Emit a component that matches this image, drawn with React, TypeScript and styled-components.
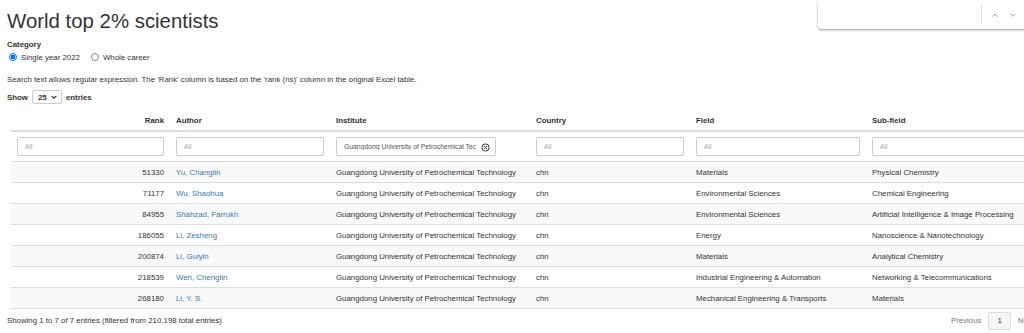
import React, { FC } from "react";
import styled, { createGlobalStyle } from "styled-components";

const GlobalStyle = createGlobalStyle`
  html, body {
    margin: 0;
    padding: 0;
    background: #fff;
    overflow: hidden;
  }
  body {
    font-family: "Liberation Sans", Arial, sans-serif;
    font-size: 7.85px;
    color: #333;
  }
`;

const Page = styled.div`
  position: relative;
  width: 1024px;
  height: 333px;
  overflow: hidden;
  padding-left: 7px;
  box-sizing: border-box;
`;

const Title = styled.h1`
  margin: 10px 0 0;
  font-size: 20.4px;
  font-weight: 400;
  line-height: 22px;
  color: #333;
`;

const Label = styled.div`
  margin-top: 8px;
  font-weight: 700;
  line-height: 9px;
`;

const RadioRow = styled.div`
  display: flex;
  align-items: center;
  gap: 9px;
  margin-top: 3px;
  height: 10px;
`;

const RadioOption = styled.label`
  display: flex;
  align-items: center;
  gap: 4px;
  padding-left: 2px;
`;

const RadioDot = styled.span<{ checked?: boolean }>`
  width: 8px;
  height: 8px;
  border-radius: 50%;
  box-sizing: border-box;
  border: 1px solid ${({ checked }) => (checked ? "#0075ff" : "#858585")};
  background: ${({ checked }) =>
    checked ? "radial-gradient(circle, #0075ff 0 2.2px, #fff 2.6px)" : "#fff"};
`;

const Note = styled.div`
  margin-top: 13px;
  line-height: 9px;
`;

const ShowRow = styled.div`
  display: flex;
  align-items: center;
  gap: 4px;
  margin-top: 6px;
  height: 14px;
  font-weight: 700;
`;

const Select = styled.div`
  display: flex;
  align-items: center;
  justify-content: space-between;
  width: 30px;
  height: 14px;
  box-sizing: border-box;
  padding: 0 4px 0 5px;
  border: 1px solid #ccc;
  border-radius: 2px;
  font-weight: 700;
`;

const TableWrap = styled.div`
  margin: 6px 0 0 4px;
`;

const Table = styled.table`
  border-collapse: collapse;
  table-layout: fixed;
  width: 1040px;
`;

const HeadCell = styled.th<{ right?: boolean }>`
  height: 20px;
  padding: 0 6px;
  text-align: ${({ right }) => (right ? "right" : "left")};
  font-weight: 700;
  border-bottom: 2px solid #ddd;
`;

const FilterCell = styled.td`
  height: 29px;
  padding: 0 6px;
  border-bottom: 1px solid #ddd;
`;

const FilterInput = styled.div<{ filled?: boolean; w?: number }>`
  position: relative;
  display: flex;
  align-items: center;
  height: 19px;
  width: ${({ w }) => (w ? `${w}px` : "100%")};
  box-sizing: border-box;
  padding: 0 ${({ filled }) => (filled ? "17px" : "7px")} 0 7px;
  border: 1px solid #ccc;
  border-radius: 2px;
  font-size: 6.8px;
  color: ${({ filled }) => (filled ? "#555" : "#aaa")};
  white-space: nowrap;
`;

const FilterText = styled.span`
  overflow: hidden;
  white-space: nowrap;
`;

const ClearIcon = styled.svg`
  position: absolute;
  right: 5px;
  top: 4.5px;
`;

const Row = styled.tr<{ striped?: boolean }>`
  background: ${({ striped }) => (striped ? "#f9f9f9" : "#fff")};
`;

const Cell = styled.td<{ right?: boolean }>`
  height: 20px;
  padding: 0 6px;
  border-top: 1px solid #ddd;
  text-align: ${({ right }) => (right ? "right" : "left")};
  white-space: nowrap;
  overflow: hidden;
`;

const Link = styled.a`
  color: #337ab7;
  text-decoration: none;
`;

const Footer = styled.div`
  display: flex;
  align-items: center;
  justify-content: space-between;
  margin-top: 2px;
  height: 19px;
`;

const Pager = styled.div`
  display: flex;
  align-items: center;
  margin-right: -17px;
`;

const PageLink = styled.span<{ active?: boolean }>`
  display: flex;
  align-items: center;
  justify-content: center;
  height: 18px;
  box-sizing: border-box;
  padding: 0 ${({ active }) => (active ? "8px" : "6px")};
  color: ${({ active }) => (active ? "#333" : "#777")};
  border: 1px solid ${({ active }) => (active ? "#ddd" : "transparent")};
  background: ${({ active }) => (active ? "#f6f6f6" : "transparent")};
  border-radius: 2px;
`;

const FindBar = styled.div`
  position: absolute;
  top: 0;
  left: 818px;
  width: 216px;
  height: 29px;
  background: #fff;
  border-radius: 0 0 3px 3px;
  box-shadow: 0 1px 3px rgba(0, 0, 0, 0.3), 0 1px 1px rgba(0, 0, 0, 0.12);
  display: flex;
  align-items: center;
`;

const FindField = styled.div`
  flex: 1;
  height: 19px;
  border-right: 1px solid #e3e3e3;
`;

const FindButtons = styled.div`
  display: flex;
  align-items: center;
  gap: 12px;
  padding: 0 18px 0 10px;
`;

const Chevron: FC<{ up?: boolean }> = ({ up }) => (
  <svg width="6" height="4" viewBox="0 0 6 4">
    <path
      d={up ? "M0.5 3.5 L3 1 L5.5 3.5" : "M0.5 0.8 L3 3.3 L5.5 0.8"}
      fill="none"
      stroke="#9a9a9a"
      strokeWidth="1"
    />
  </svg>
);

type Scientist = {
  rank: number;
  author: string;
  field: string;
  subfield: string;
};

const rows: Scientist[] = [
  { rank: 51330, author: "Yu, Changlin", field: "Materials", subfield: "Physical Chemistry" },
  { rank: 71177, author: "Wu, Shaohua", field: "Environmental Sciences", subfield: "Chemical Engineering" },
  { rank: 84955, author: "Shahzad, Farrukh", field: "Environmental Sciences", subfield: "Artificial Intelligence & Image Processing" },
  { rank: 186055, author: "Li, Zesheng", field: "Energy", subfield: "Nanoscience & Nanotechnology" },
  { rank: 200874, author: "Li, Guiyin", field: "Materials", subfield: "Analytical Chemistry" },
  { rank: 218539, author: "Wen, Chenglin", field: "Industrial Engineering & Automation", subfield: "Networking & Telecommunications" },
  { rank: 268180, author: "Li, Y. S.", field: "Mechanical Engineering & Transports", subfield: "Materials" },
];

const institute = "Guangdong University of Petrochemical Technology";

const App: FC = () => {
  return (
    <Page>
      <GlobalStyle />
      <Title>World top 2% scientists</Title>
      <Label>Category</Label>
      <RadioRow>
        <RadioOption>
          <RadioDot checked />
          Single year 2022
        </RadioOption>
        <RadioOption>
          <RadioDot />
          Whole career
        </RadioOption>
      </RadioRow>
      <Note>
        Search text allows regular expression. The 'Rank' column is based on
        the 'rank (ns)' column in the original Excel table.
      </Note>
      <ShowRow>
        Show
        <Select>
          <span>25</span>
          <svg width="6" height="4" viewBox="0 0 6 4">
            <path d="M0.6 0.8 L3 3.2 L5.4 0.8" fill="none" stroke="#333" strokeWidth="1.1" />
          </svg>
        </Select>
        entries
      </ShowRow>

      <TableWrap>
        <Table>
          <colgroup>
            <col style={{ width: 159 }} />
            <col style={{ width: 160 }} />
            <col style={{ width: 200 }} />
            <col style={{ width: 160 }} />
            <col style={{ width: 176 }} />
            <col style={{ width: 185 }} />
          </colgroup>
          <thead>
            <tr>
              <HeadCell right>Rank</HeadCell>
              <HeadCell>Author</HeadCell>
              <HeadCell>Institute</HeadCell>
              <HeadCell>Country</HeadCell>
              <HeadCell>Field</HeadCell>
              <HeadCell>Sub-field</HeadCell>
            </tr>
            <tr>
              <FilterCell><FilterInput>All</FilterInput></FilterCell>
              <FilterCell><FilterInput>All</FilterInput></FilterCell>
              <FilterCell>
                <FilterInput filled w={160}>
                  <FilterText>Guangdong University of Petrochemical Tec</FilterText>
                  <ClearIcon width="9" height="9" viewBox="0 0 10 10">
                    <circle cx="5" cy="5" r="4" fill="none" stroke="#333" strokeWidth="1.1" />
                    <path d="M3.4 3.4 L6.6 6.6 M6.6 3.4 L3.4 6.6" stroke="#333" strokeWidth="1.1" />
                  </ClearIcon>
                </FilterInput>
              </FilterCell>
              <FilterCell><FilterInput>All</FilterInput></FilterCell>
              <FilterCell><FilterInput>All</FilterInput></FilterCell>
              <FilterCell><FilterInput>All</FilterInput></FilterCell>
            </tr>
          </thead>
          <tbody>
            {rows.map((r, i) => (
              <Row key={r.rank} striped={i % 2 === 0}>
                <Cell right>{r.rank}</Cell>
                <Cell><Link href="#">{r.author}</Link></Cell>
                <Cell>{institute}</Cell>
                <Cell>chn</Cell>
                <Cell>{r.field}</Cell>
                <Cell>{r.subfield}</Cell>
              </Row>
            ))}
            <tr>
              <td colSpan={6} style={{ borderTop: "1px solid #ddd", height: 0, padding: 0 }} />
            </tr>
          </tbody>
        </Table>
      </TableWrap>

      <Footer>
        <span>Showing 1 to 7 of 7 entries (filtered from 210,198 total entries)</span>
        <Pager>
          <PageLink>Previous</PageLink>
          <PageLink active>1</PageLink>
          <PageLink>Next</PageLink>
        </Pager>
      </Footer>

      <FindBar>
        <FindField />
        <FindButtons>
          <Chevron up />
          <Chevron />
        </FindButtons>
      </FindBar>
    </Page>
  );
};

export default App;
